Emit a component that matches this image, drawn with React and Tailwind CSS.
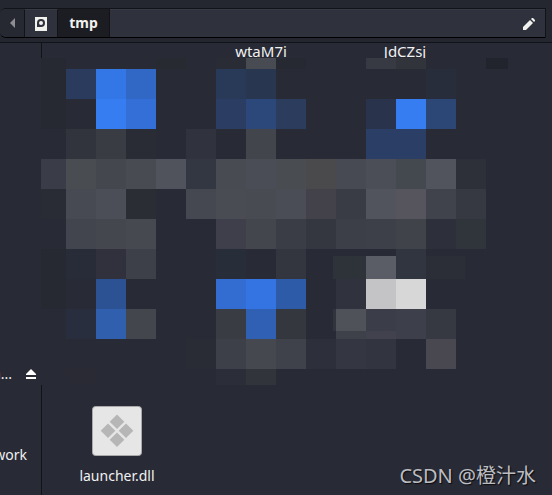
import React from "react";

// [x, y, width, height, color]
const blocks = [
  [41, 58, 25, 71, "#272932"],
  [156, 58, 30, 11, "#272a31"],
  [216, 58, 30, 11, "#292c34"],
  [246, 58, 30, 11, "#494b53"],
  [276, 58, 30, 11, "#272932"],
  [366, 58, 30, 11, "#373943"],
  [396, 58, 30, 11, "#31343b"],
  [486, 58, 22, 11, "#22242d"],

  [66, 69, 30, 30, "#2a3b5e"],
  [96, 69, 30, 30, "#3376e6"],
  [126, 69, 30, 30, "#3168c6"],
  [216, 69, 30, 30, "#293a58"],
  [246, 69, 30, 30, "#28364f"],
  [426, 69, 30, 30, "#272d3b"],

  [96, 99, 30, 30, "#377df2"],
  [126, 99, 30, 30, "#346fd7"],
  [216, 99, 30, 30, "#2b3d62"],
  [246, 99, 30, 30, "#2c4779"],
  [276, 99, 30, 30, "#2c3c5d"],
  [366, 99, 30, 30, "#29334b"],
  [396, 99, 30, 30, "#377df2"],
  [426, 99, 30, 30, "#2c4775"],

  [66, 129, 30, 30, "#31343c"],
  [96, 129, 30, 30, "#393c43"],
  [126, 129, 30, 30, "#292c34"],
  [186, 129, 30, 30, "#30323e"],
  [246, 129, 30, 30, "#42454c"],
  [366, 129, 60, 30, "#2a3e66"],

  [41, 159, 25, 30, "#3a3c47"],
  [66, 159, 30, 30, "#494c51"],
  [96, 159, 30, 30, "#44474e"],
  [126, 159, 30, 30, "#484b52"],
  [156, 159, 30, 30, "#51535c"],
  [186, 159, 30, 30, "#333742"],
  [216, 159, 30, 30, "#494b53"],
  [246, 159, 30, 30, "#4a4d55"],
  [276, 159, 30, 30, "#494c51"],
  [306, 159, 30, 30, "#4a4a4c"],
  [336, 159, 30, 30, "#484a53"],
  [366, 159, 30, 30, "#4b4e56"],
  [396, 159, 30, 30, "#44484f"],
  [426, 159, 30, 30, "#51545c"],
  [456, 159, 30, 30, "#2d3038"],

  [41, 189, 25, 30, "#292b35"],
  [66, 189, 30, 30, "#474a52"],
  [96, 189, 30, 30, "#4c4e57"],
  [126, 189, 30, 30, "#2a2d34"],
  [186, 189, 30, 30, "#454850"],
  [216, 189, 30, 30, "#494c52"],
  [246, 189, 30, 30, "#484b52"],
  [276, 189, 30, 30, "#4a4d55"],
  [306, 189, 30, 30, "#43424b"],
  [336, 189, 30, 30, "#3a3c45"],
  [366, 189, 30, 30, "#51545d"],
  [396, 189, 30, 30, "#56555e"],
  [426, 189, 30, 30, "#40434b"],
  [456, 189, 30, 30, "#363941"],

  [66, 219, 30, 30, "#42454d"],
  [96, 219, 30, 30, "#45474f"],
  [126, 219, 30, 30, "#474950"],
  [216, 219, 30, 30, "#3e3f4b"],
  [246, 219, 30, 30, "#43464d"],
  [276, 219, 30, 30, "#3b3d46"],
  [306, 219, 30, 30, "#343740"],
  [336, 219, 30, 30, "#3c3f48"],
  [366, 219, 30, 30, "#3d3f49"],
  [396, 219, 30, 30, "#41434b"],
  [426, 219, 30, 30, "#2d2f3b"],
  [456, 219, 30, 30, "#30343b"],

  [41, 249, 25, 60, "#272932"],
  [66, 249, 30, 30, "#272c38"],
  [96, 249, 30, 30, "#30313c"],
  [126, 249, 30, 30, "#3d4048"],
  [216, 249, 30, 30, "#272e39"],
  [276, 249, 30, 30, "#34363f"],
  [396, 249, 30, 30, "#31353f"],
  [333, 256, 33, 23, "#2e3239"],
  [366, 256, 30, 23, "#5a5d65"],
  [426, 256, 39, 23, "#2b2d37"],

  [96, 279, 30, 30, "#2c5293"],
  [216, 279, 30, 30, "#336dd2"],
  [246, 279, 30, 30, "#3473e2"],
  [276, 279, 30, 30, "#2e5ba7"],
  [336, 279, 30, 30, "#30323d"],
  [366, 279, 30, 30, "#c4c4c6"],
  [396, 279, 30, 30, "#d7d7d7"],

  [66, 309, 30, 30, "#282e3d"],
  [96, 309, 30, 30, "#305fae"],
  [126, 309, 30, 30, "#43464d"],
  [216, 309, 30, 30, "#3a3c44"],
  [246, 309, 30, 30, "#2f60b3"],
  [276, 309, 30, 30, "#35373f"],
  [333, 309, 3, 22, "#31343d"],
  [336, 309, 30, 22, "#4f5259"],
  [336, 331, 30, 8, "#3e404a"],
  [366, 309, 30, 22, "#3b3d48"],
  [366, 331, 30, 8, "#41424d"],
  [396, 309, 30, 30, "#3d3f4a"],
  [426, 309, 30, 30, "#363941"],

  [186, 339, 30, 30, "#292b35"],
  [216, 339, 30, 30, "#3d4048"],
  [246, 339, 30, 30, "#464850"],
  [276, 339, 30, 30, "#40424b"],
  [306, 339, 30, 30, "#2d2f3b"],
  [336, 339, 30, 30, "#343641"],
  [366, 339, 30, 30, "#32343f"],
  [426, 339, 30, 30, "#494850"],

  [66, 369, 30, 16, "#292a34"],
  [216, 369, 30, 16, "#2b2d38"],
  [246, 369, 30, 16, "#31343b"],
];

const Mosaic = () => (
  <svg
    className="relative -ml-px block shrink-0"
    width="467"
    height="327"
    viewBox="41 58 467 327"
    shapeRendering="crispEdges"
    aria-hidden="true"
  >
    <rect x="41" y="58" width="467" height="327" fill="#282a35" />
    {blocks.map(([x, y, w, h, fill]) => (
      <rect key={`${x}-${y}`} x={x} y={y} width={w} height={h} fill={fill} />
    ))}
  </svg>
);

const DiskIcon = () => (
  <svg width="12" height="14" viewBox="0 0 12 14" aria-hidden="true">
    <path d="M0 0h12v14H0z" fill="#f1f1ee" />
    <path d="M6 2a4 4 0 1 1 0 8H2V6a4 4 0 0 1 4-4z" fill="#2f313d" />
    <circle cx="6" cy="6" r="2" fill="#f1f1ee" />
  </svg>
);

const PencilIcon = () => (
  <svg width="12" height="12" viewBox="0 0 12 12" fill="#f1f1ee" aria-hidden="true">
    <path d="M0 9 7 2l3 3-7 7H0z" />
    <path d="M8 1 9 0h1l2 2v1l-1 1z" />
  </svg>
);

const EjectIcon = () => (
  <svg width="10" height="10" viewBox="0 0 10 10" fill="#ffffff" aria-hidden="true">
    <path d="M5 0l5 5v1H0V5z" />
    <path d="M0 8h10v2H0z" />
  </svg>
);

const DllIcon = () => (
  <svg width="50" height="50" viewBox="0 0 50 50" aria-hidden="true">
    <rect x="0.5" y="0.5" width="49" height="49" rx="3" fill="#e6e6e6" stroke="#a9a9aa" />
    <g fill="#b6b6b6">
      <path d="M25 8.500l7.300 7.300-7.300 7.300-7.300-7.300z" />
      <path d="M16 17.500l7.300 7.300-7.300 7.300-7.300-7.300z" />
      <path d="M34 17.500l7.300 7.300-7.300 7.300-7.300-7.300z" />
      <path d="M25 26.500l7.300 7.300-7.300 7.300-7.300-7.300z" />
    </g>
  </svg>
);

const PathBar = () => (
  <header className="border-b border-[#111318] bg-[#242630] pt-2 pr-1.5 pb-1">
    <nav className="flex h-[30px] overflow-hidden rounded-l-md border-y border-r border-t-[#111318] border-r-[#111318] border-b-black bg-[#2f313d]">
      <button
        aria-label="Back"
        className="flex w-6 items-center justify-center bg-[#262832]"
      >
        <svg width="5" height="10" viewBox="0 0 5 10" fill="#8d8e91" aria-hidden="true">
          <path d="M5 0v10L0 5z" />
        </svg>
      </button>
      <button
        aria-label="File system"
        className="flex w-[34px] items-center justify-center border-x border-t border-x-[#111318] border-t-[#383a45]"
      >
        <DiskIcon />
      </button>
      <button className="w-[52px] border-r border-[#111318] bg-[#1b1d23] text-[14px] leading-5 font-bold text-[#f1f1ee]">
        tmp
      </button>
      <div className="flex flex-1 items-center justify-end border-t border-[#383a45] pr-2.5">
        <button aria-label="Edit location">
          <PencilIcon />
        </button>
      </div>
    </nav>
  </header>
);

const Sidebar = () => (
  <aside className="flex w-[42px] shrink-0 flex-col overflow-hidden border-r border-[#111318] pt-[321px] text-[14px] leading-5">
    <div className="flex h-5 items-center justify-end pr-[5px]">
      <span className="mr-3.5">a...</span>
      <button aria-label="Eject">
        <EjectIcon />
      </button>
    </div>
    <a href="#network" className="mt-[61px] flex justify-end pr-3.5">
      Network
    </a>
  </aside>
);

const App = () => {
  return (
    <div className="flex min-h-screen flex-col overflow-hidden bg-[#282a35] font-['Noto_Sans','Noto_Sans_CJK_SC',sans-serif] text-[#f1f1f1]">
      <PathBar />
      <div className="flex flex-1">
        <Sidebar />
        <main className="flex min-w-0 flex-1 flex-col">
          <div className="flex h-[15px] pl-[147px] text-[15px] leading-4">
            <span className="w-36 text-center">wtaM7i</span>
            <span className="w-36 text-center">JdCZsj</span>
          </div>
          <Mosaic />
          <div className="flex flex-1 items-start justify-between">
            <figure className="flex w-[150px] flex-col items-center pt-[21px]">
              <DllIcon />
              <figcaption className="mt-2.5 text-[14px] leading-5">launcher.dll</figcaption>
            </figure>
            <p className="self-end pr-4 pb-[5px] text-[20px] leading-7 text-[#bcbdc0] [text-shadow:1px_1px_1px_#0b0c10]">
              CSDN @橙汁水
            </p>
          </div>
        </main>
      </div>
    </div>
  );
};

export default App;
